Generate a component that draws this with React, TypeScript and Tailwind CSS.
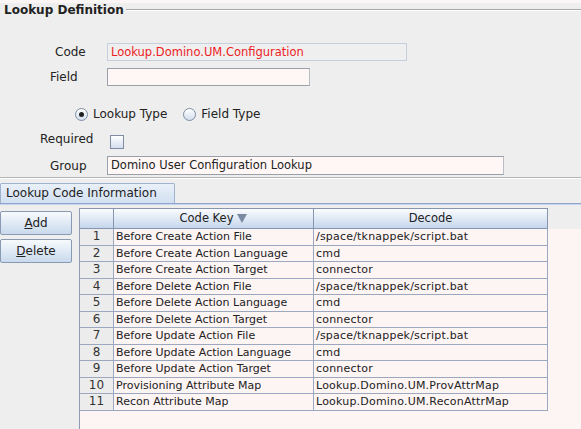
import React from "react";

const rows = [
  ["Before Create Action File", "/space/tknappek/script.bat"],
  ["Before Create Action Language", "cmd"],
  ["Before Create Action Target", "connector"],
  ["Before Delete Action File", "/space/tknappek/script.bat"],
  ["Before Delete Action Language", "cmd"],
  ["Before Delete Action Target", "connector"],
  ["Before Update Action File", "/space/tknappek/script.bat"],
  ["Before Update Action Language", "cmd"],
  ["Before Update Action Target", "connector"],
  ["Provisioning Attribute Map", "Lookup.Domino.UM.ProvAttrMap"],
  ["Recon Attribute Map", "Lookup.Domino.UM.ReconAttrMap"],
];

const Radio = ({ checked }: { checked?: boolean }) => (
  <span className="w-[13px] h-[13px] rounded-full border border-[#7f8ca3] bg-gradient-to-b from-white to-[#d3deed] flex items-center justify-center">
    {checked && <span className="w-[5px] h-[5px] rounded-full bg-[#202020]" />}
  </span>
);

const Button = ({ k, rest }: { k: string; rest: string }) => (
  <button className="w-[72px] h-[24px] border border-[#8a9ab3] rounded-[2px] bg-gradient-to-b from-[#f7fafd] to-[#c9d9ec] text-[12px] text-[#222]">
    <span className="underline">{k}</span>
    {rest}
  </button>
);

export default function App() {
  return (
    <div
      className="w-[581px] h-[429px] bg-[#eeeeee] overflow-hidden text-[#222] flex flex-col"
      style={{ fontFamily: '"DejaVu Sans", Verdana, sans-serif' }}
    >
      <div className="h-[3px] bg-[#fbf5f5]" />

      {/* Lookup Definition */}
      <div className="flex items-center h-[14px] pl-[4px]">
        <span className="text-[12px] font-bold text-[#222]">Lookup Definition</span>
        <div className="flex-1 ml-[2px] border-t border-[#a8a8a8] border-b-white border-b" />
      </div>

      <div className="flex items-center h-[18px] mt-[26px]">
        <span className="w-[107px] pl-[55px] text-[12px]">Code</span>
        <div className="w-[300px] h-[18px] border border-[#c7cfdf] bg-[#efefef] pl-[3px] text-[11.5px] text-[#ee1c25] leading-[16px]">
          Lookup.Domino.UM.Configuration
        </div>
      </div>

      <div className="flex items-center h-[18px] mt-[7px]">
        <span className="w-[107px] pl-[50px] text-[12px]">Field</span>
        <div className="w-[203px] h-[18px] border border-[#9aa0aa] border-r-[#b8bcc4] bg-[#fff6f6]" />
      </div>

      <div className="flex items-center h-[16px] mt-[20px] text-[12px]">
        <span className="ml-[75px]">
          <Radio checked />
        </span>
        <span className="ml-[5px]">Lookup Type</span>
        <span className="ml-[16px]">
          <Radio />
        </span>
        <span className="ml-[5px]">Field Type</span>
      </div>

      <div className="flex items-center h-[16px] mt-[10px]">
        <span className="w-[110px] pl-[40px] text-[12px] -mt-[2px]">Required</span>
        <span className="w-[14px] h-[14px] border border-[#7f8ca3] bg-gradient-to-b from-white to-[#d3deed] mt-[4px]" />
      </div>

      <div className="flex items-center h-[19px] mt-[8px]">
        <span className="w-[107px] pl-[50px] text-[12px]">Group</span>
        <div className="w-[397px] h-[19px] border border-[#9aa0aa] border-r-[#b8bcc4] bg-[#fff6f6] pl-[3px] text-[11.5px] leading-[17px]">
          Domino User Configuration Lookup
        </div>
      </div>

      <div className="mt-[2px] border-t border-[#b4b4b4] border-b border-b-white" />

      {/* Tab */}
      <div className="flex items-end h-[24px]">
        <div className="w-[175px] h-[20px] border border-b-0 border-[#9fb2d0] rounded-t-[2px] bg-gradient-to-b from-[#e9f0f9] to-[#d2e0f1] pl-[5px] text-[12px] leading-[19px]">
          Lookup Code Information
        </div>
      </div>
      <div className="h-[2px] bg-[#8ea6cf] border-b border-[#c8d6ec]" />

      <div className="flex flex-1 min-h-0">
        <div className="w-[79px] flex flex-col gap-[4px] pt-[6px] pl-0">
          <Button k="A" rest="dd" />
          <Button k="D" rest="elete" />
        </div>
        <div className="flex-1 flex flex-col border-l border-[#8f9bb3] mt-[3px] bg-[#fdf4f4]">
          <div className="flex h-[21px] bg-[#eeeeee] text-[11.5px]">
            <div className="w-[34px] border border-l-0 border-[#8795b0] bg-gradient-to-b from-[#fbfcfe] to-[#c5d6ec]" />
            <div className="w-[200px] border-y border-r border-[#8795b0] bg-gradient-to-b from-[#fbfcfe] to-[#c5d6ec] flex items-center justify-center gap-[4px]">
              Code Key
              <svg width="10" height="9" viewBox="0 0 10 9">
                <path d="M0 0 H10 L5 9 Z" fill="#7a8aa3" />
              </svg>
            </div>
            <div className="w-[234px] border-y border-r border-[#8795b0] bg-gradient-to-b from-[#fbfcfe] to-[#c5d6ec] flex items-center justify-center">
              Decode
            </div>
          </div>
          {rows.map(([key, val], i) => (
            <div key={i} className="flex h-[16.5px] text-[11px] leading-[15px]">
              <div className="w-[34px] border-b border-r border-[#9ba8c0] bg-[#ececec] text-center text-[12px] text-[#333]">
                {i + 1}
              </div>
              <div className="w-[200px] border-b border-r border-[#9ba8c0] pl-[2px] truncate">{key}</div>
              <div className="w-[234px] border-b border-r border-[#9ba8c0] pl-[2px] truncate tracking-[0.2px]">{val}</div>
            </div>
          ))}
        </div>
      </div>
    </div>
  );
}
